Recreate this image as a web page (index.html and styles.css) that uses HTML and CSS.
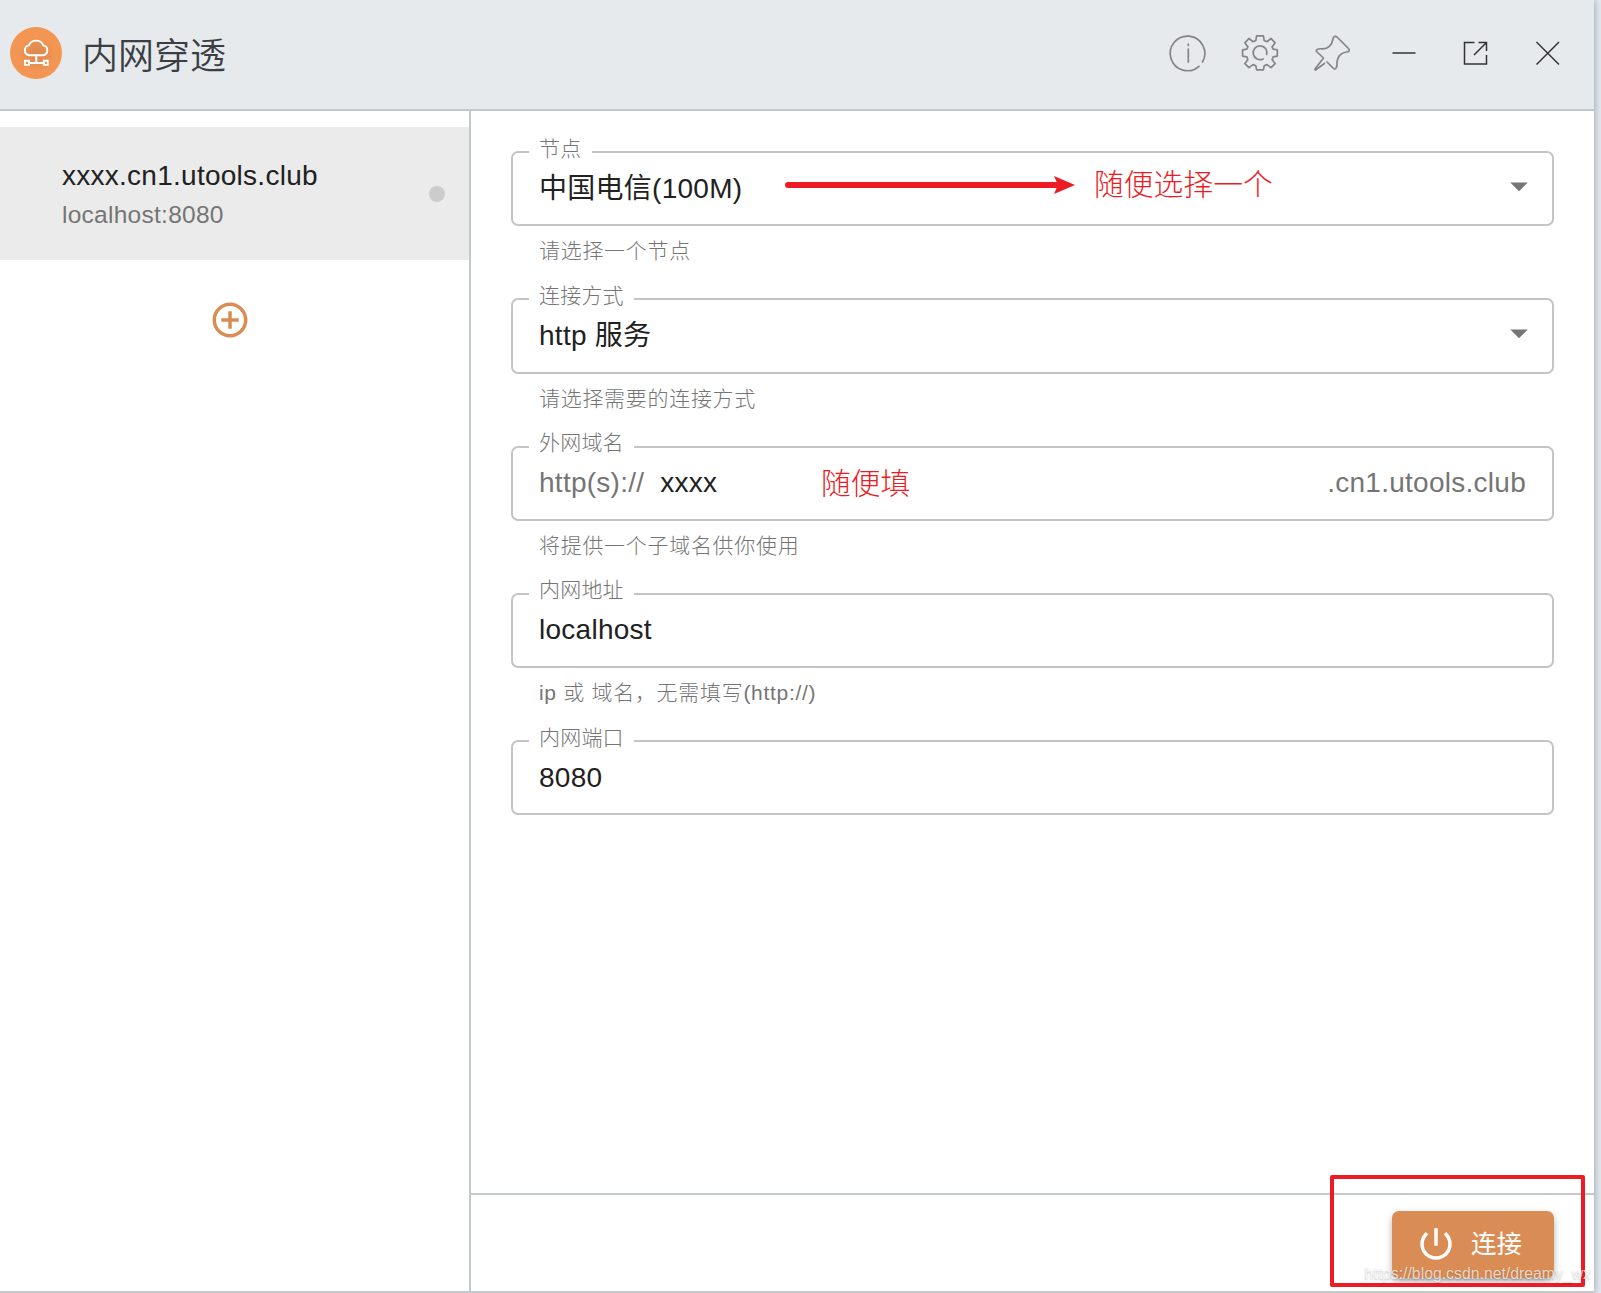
FILE: index.html
```html
<!DOCTYPE html>
<html lang="zh-CN">
  <head>
    <meta charset="utf-8" />
    <title>内网穿透</title>
    <link rel="stylesheet" href="styles.css" />
  </head>

  <body>
    <div class="window">
      <header class="titlebar">
        <svg class="logo" viewBox="0 0 52 52">
          <defs>
            <radialGradient id="shade">
              <stop offset=".3" stop-color="#d98850" stop-opacity=".8" />
              <stop offset="1" stop-color="#d98850" stop-opacity="0" />
            </radialGradient>
          </defs>
          <circle cx="26" cy="26" r="26" fill="#f39653" />
          <circle cx="27" cy="28" r="18" fill="url(#shade)" />
          <g fill="none" stroke="#fff" stroke-width="1.9">
            <path d="M19 28.200a5 5 0 0 1-.2-9.800 8 8 0 0 1 14.600 0 5 5 0 0 1-.2 9.800z" />
            <path d="M26.300 28.500v7.500M19 36h14" />
            <path d="M15 33.700h4v4.200h-4zM33.800 33.700h4v4.200h-4z" />
          </g>
        </svg>
        <h1>内网穿透</h1>

        <nav class="actions">
          <svg viewBox="0 0 36 36" class="soft">
            <path d="M32.500 27A17.300 17.300 0 1 0 29 31.300" />
            <path d="M18.300 14.200v12.800M18.300 9v1.400" />
          </svg>
          <svg viewBox="0 0 36 36" class="soft">
            <path d="M14.600 .8h6.800l.8 4.700 2.700 1.200 4.200-3.200 4 4.300-3 4.200 1.100 2.200 4.100.6v6.400l-4.100.6-1.100 2.800 3 4-4 4-4.200-3-2.700 1.200-.8 4h-6.800l-.8-4-2.700-1.200-4.200 3-4-4 3-4-1.100-2.800-4.200-.6v-6.400l4.200-.6 1.100-2.200-3-4.200 4-4.300 4.200 3.200 2.700-1.200z" />
            <path d="M24.700 19.500a6.900 6.900 0 1 0-3.600 4.400" />
          </svg>
          <svg viewBox="0 0 36 36" class="soft">
            <path d="M10.500 28.500L1.500 35l-.7-.7L9.500 23 2.500 16.500c-1-1.500 1.500-3 5-2.700C14 14.500 18 10 19 4c.3-2.500 2-3.500 4-2l11.500 11.500c1.500 2 .5 3.500-2 3.500-6 1-9 5.500-9.500 10 .5 5-1.500 8.500-3.500 6.500l-6.500-6.500" />
          </svg>
          <svg viewBox="0 0 36 36"><path d="M6.500 18h23" /></svg>
          <svg viewBox="0 0 36 36">
            <path d="M16.500 7.500h-10v21.500h22v-9M20.500 7.500h8v8.500M28.500 7.500L16 20" />
          </svg>
          <svg viewBox="0 0 36 36"><path d="M6.500 7l22.500 22.500M29 7L6.500 29.500" /></svg>
        </nav>
      </header>

      <div class="content">
        <aside>
          <div class="tunnel">
            <div>
              <div class="domain">xxxx.cn1.utools.club</div>
              <div class="local">localhost:8080</div>
            </div>
            <span class="status"></span>
          </div>
          <svg class="add" viewBox="0 0 24 24">
            <path d="M13 7h-2v4H7v2h4v4h2v-4h4v-2h-4V7zm-1-5C6.480 2 2 6.480 2 12s4.480 10 10 10 10-4.480 10-10S17.520 2 12 2zm0 18c-4.410 0-8-3.590-8-8s3.590-8 8-8 8 3.590 8 8-3.590 8-8 8z" />
          </svg>
        </aside>

        <main>
          <form>
            <div class="field">
              <label>节点</label>
              <div class="control">
                <span class="value">中国电信(100M)</span>
                <svg class="caret" viewBox="0 0 24 24"><path d="M7 10l5 5 5-5z" /></svg>
                <div class="note note-node">
                  <svg class="arrow" viewBox="0 0 290 20">
                    <path d="M3 10h270" />
                    <path class="head" d="M269 1l21 9-21 9 4-9z" />
                  </svg>
                  <span>随便选择一个</span>
                </div>
              </div>
              <p>请选择一个节点</p>
            </div>

            <div class="field">
              <label>连接方式</label>
              <div class="control">
                <span class="value">http 服务</span>
                <svg class="caret" viewBox="0 0 24 24"><path d="M7 10l5 5 5-5z" /></svg>
              </div>
              <p>请选择需要的连接方式</p>
            </div>

            <div class="field">
              <label>外网域名</label>
              <div class="control">
                <span class="affix">http(s)://</span>
                <span class="value">xxxx</span>
                <span class="affix">.cn1.utools.club</span>
                <div class="note note-domain">随便填</div>
              </div>
              <p>将提供一个子域名供你使用</p>
            </div>

            <div class="field">
              <label>内网地址</label>
              <div class="control"><span class="value">localhost</span></div>
              <p>ip 或 域名，无需填写(http://)</p>
            </div>

            <div class="field">
              <label>内网端口</label>
              <div class="control"><span class="value">8080</span></div>
            </div>
          </form>

          <footer>
            <button type="button">
              <svg viewBox="0 0 24 24">
                <path d="M13 3h-2v10h2V3zm4.830 2.170l-1.420 1.420C17.990 7.860 19 9.810 19 12c0 3.870-3.130 7-7 7s-7-3.130-7-7c0-2.190 1.010-4.140 2.580-5.420L6.170 5.170C4.230 6.820 3 9.260 3 12c0 4.970 4.030 9 9 9s9-4.030 9-9c0-2.740-1.230-5.180-3.170-6.830z" />
              </svg>
              <span>连接</span>
            </button>
            <div class="highlight"></div>
            <span class="watermark">https://blog.csdn.net/dreamy_wx</span>
          </footer>
        </main>
      </div>
    </div>
  </body>
</html>
```

FILE: styles.css
```css
* {
  box-sizing: border-box;
}

body {
  margin: 0;
  background-color: #e4e9ee;
  font-family: "Liberation Sans", "Noto Sans CJK SC", sans-serif;
  color: #212121;
  overflow: hidden;
}

.window {
  display: flex;
  flex-direction: column;
  width: 1594px;
  height: 1293px;
  background-color: #fff;
  border-bottom: 2px solid #c3c8cc;
  box-shadow: 0 0 8px #8d99a4;
}

.titlebar {
  display: flex;
  align-items: center;
  height: 111px;
  padding: 0 28px 4px 10px;
  background-color: #e6eaed;
  border-bottom: 2px solid #c3c8cc;

  & .logo {
    width: 52px;
    height: 52px;
  }

  & h1 {
    margin: 0 0 0 20px;
    font-family: "Noto Sans CJK SC", sans-serif;
    font-size: 36px;
    font-weight: 350;
    line-height: 52px;
    color: #3b3f43;
  }
}

.actions {
  display: flex;
  gap: 36px;
  margin-left: auto;

  & svg {
    width: 36px;
    height: 36px;
    fill: none;
    stroke: #333;
    stroke-width: 1.5;
  }

  & .soft {
    stroke: #858585;
    stroke-width: 1.7;
    stroke-linecap: round;
    stroke-linejoin: round;
    overflow: visible;
  }
}

.content {
  display: flex;
  flex: 1;
}

aside {
  display: flex;
  flex-direction: column;
  width: 471px;
  padding-top: 16px;
  border-right: 2px solid #c3c8cc;
}

.tunnel {
  display: flex;
  align-items: center;
  justify-content: space-between;
  height: 133px;
  padding: 0 24px 0 62px;
  background-color: #ebebeb;

  & .domain {
    font-size: 28px;
    line-height: 42px;
    letter-spacing: 0.00938em;
  }

  & .local {
    font-size: 24.5px;
    line-height: 35px;
    letter-spacing: 0.01071em;
    color: #757575;
  }

  & .status {
    width: 16px;
    height: 16px;
    border-radius: 50%;
    background-color: #ccc;
  }
}

.add {
  width: 42px;
  height: 42px;
  margin: 39px 0 0 209px;
  fill: #d98d54;
}

main {
  display: flex;
  flex: 1;
  flex-direction: column;
}

form {
  flex: 1;
  padding: 40px 40px 0;
}

.field {
  position: relative;
  height: 147.25px;

  & label {
    position: absolute;
    top: -15.5px;
    left: 18px;
    z-index: 1;
    padding: 0 10.5px 0 10px;
    background-color: #fff;
    font-size: 21px;
    font-weight: 300;
    line-height: 26px;
    letter-spacing: 0.00938em;
    color: #757575;
  }

  & p {
    margin: 11px 0 0 28px;
    font-size: 21px;
    font-weight: 300;
    line-height: 28px;
    letter-spacing: 0.03333em;
    color: #757575;
  }
}

.control {
  position: relative;
  display: flex;
  align-items: center;
  height: 75.25px;
  padding: 0 26px;
  border: 2px solid #c4c4c4;
  border-radius: 7px;
  font-size: 28px;
  line-height: 34px;
  letter-spacing: 0.00938em;

  & .value {
    flex: 1;
  }

  & .affix {
    color: #757575;
  }

  & .affix + .value {
    margin-left: 16px;
  }

  & .caret {
    width: 42px;
    height: 42px;
    margin: 0 -14px 5px 0;
    fill: #757575;
  }
}

/* red remarks drawn over the fields */
.note {
  position: absolute;
  display: flex;
  align-items: center;
  font-size: 29.8px;
  font-weight: 300;
  line-height: 36px;
  letter-spacing: 0;
  color: #ed1c24;
}

.note-node {
  top: 14px;
  left: 272px;
  gap: 19px;
}

.note-domain {
  top: 18px;
  left: 308px;
}

.arrow {
  width: 290px;
  height: 20px;
  stroke: #ed1c24;
  stroke-width: 6;
  stroke-linecap: round;

  & .head {
    fill: #ed1c24;
    stroke: none;
  }
}

footer {
  position: relative;
  display: flex;
  justify-content: flex-end;
  height: 98px;
  padding: 16px 40px 0;
  border-top: 2px solid #c3c8cc;

  & button {
    display: flex;
    align-items: center;
    gap: 14px;
    width: 162px;
    height: 67px;
    padding: 0 0 2px 23px;
    border: 0;
    border-radius: 7px;
    background-color: #d98d54;
    box-shadow: 0 4px 7px -3px rgba(0, 0, 0, 0.3), 0 3px 8px rgba(0, 0, 0, 0.2);
    font-family: inherit;
    font-size: 25.5px;
    line-height: 30px;
    color: #fff;

    & svg {
      width: 42px;
      height: 42px;
      fill: #fff;
    }
  }
}

.highlight {
  position: absolute;
  top: -20px;
  right: 9px;
  width: 255px;
  height: 112px;
  border: 4px solid #ed1c24;
  border-radius: 2px;
}

.watermark {
  position: absolute;
  right: 3px;
  bottom: 8px;
  font-size: 15.8px;
  line-height: 18px;
  color: rgba(255, 255, 255, 0.7);
  text-shadow: 0 1px 2px rgba(0, 0, 0, 0.25);
}
```
